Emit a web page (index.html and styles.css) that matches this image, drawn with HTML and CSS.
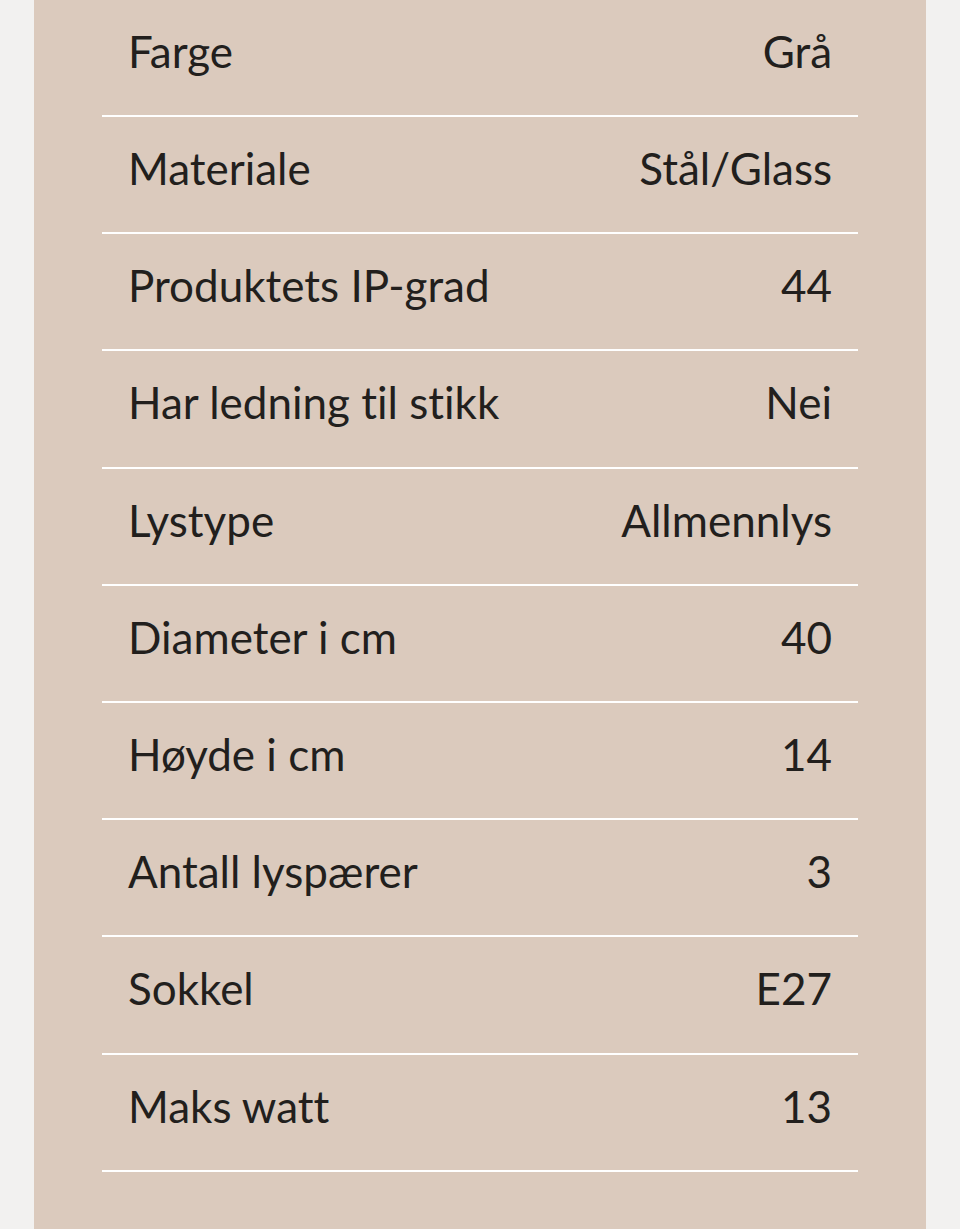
FILE: index.html
```html
<!DOCTYPE html>
<html lang="no">
<head>
<meta charset="utf-8">
<title>Spesifikasjoner</title>
<link rel="stylesheet" href="styles.css">
</head>
<body>
<section class="panel">
  <dl class="specs">
    <div class="row"><dt>Farge</dt><dd>Grå</dd></div>
    <div class="row"><dt>Materiale</dt><dd>Stål/Glass</dd></div>
    <div class="row"><dt>Produktets IP-grad</dt><dd>44</dd></div>
    <div class="row"><dt>Har ledning til stikk</dt><dd>Nei</dd></div>
    <div class="row"><dt>Lystype</dt><dd>Allmennlys</dd></div>
    <div class="row"><dt>Diameter i cm</dt><dd>40</dd></div>
    <div class="row"><dt>Høyde i cm</dt><dd>14</dd></div>
    <div class="row"><dt>Antall lyspærer</dt><dd>3</dd></div>
    <div class="row"><dt>Sokkel</dt><dd>E27</dd></div>
    <div class="row"><dt>Maks watt</dt><dd>13</dd></div>
  </dl>
</section>
</body>
</html>
```

FILE: styles.css
```css
html, body {
  margin: 0;
  padding: 0;
  background: #f2f1f0;
  height: 100%;
  overflow: hidden;
}

.panel {
  margin: 0 34px;
  background: #dbcabd;
  min-height: 1229px;
  padding: 0 68px;
  box-sizing: border-box;
}

.specs {
  margin: 0;
  padding: 0;
  font-family: Lato, "Noto Sans", sans-serif;
  font-size: 44px;
  color: #221f1d;
  font-variant-ligatures: none;
  font-feature-settings: "liga" 0, "dlig" 0;
}

.row {
  display: flex;
  justify-content: space-between;
  align-items: center;
  box-sizing: border-box;
  height: 117.2px;
  border-bottom: 2px solid #ffffff;
  padding: 0 26px 13px;
}

.row:first-child {
  height: 117px;
}

.row dt, .row dd {
  margin: 0;
  line-height: 1;
}
```
